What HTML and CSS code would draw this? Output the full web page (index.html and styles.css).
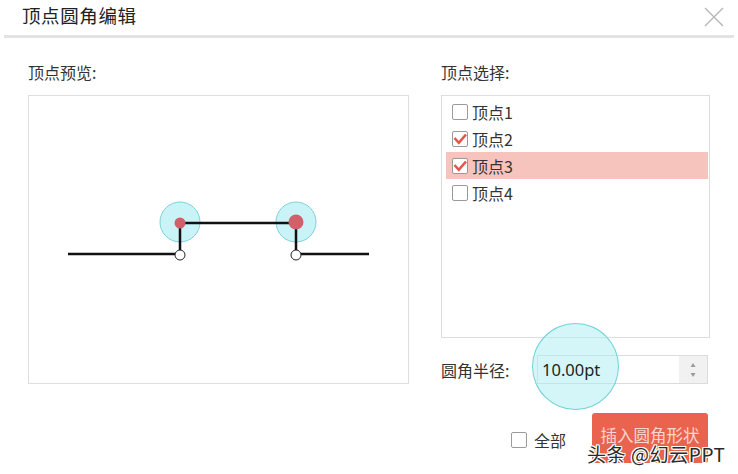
FILE: index.html
```html
<!DOCTYPE html>
<html lang="zh">
<head>
<meta charset="utf-8">
<link rel="stylesheet" href="styles.css">
</head>
<body>
<div class="dialog">
  <div class="header">
    <div class="title">顶点圆角编辑</div>
    <svg class="close" width="20" height="20" viewBox="0 0 20 20"><path d="M1 1 L19 19 M19 1 L1 19" stroke="#b5b5b5" stroke-width="1.3" fill="none"/></svg>
  </div>
  <div class="sep"></div>
  <div class="content">
    <div class="col-left">
      <div class="label">顶点预览:</div>
      <div class="preview">
        <svg class="diagram" width="379" height="287" viewBox="0 0 379 287">
          <circle cx="151" cy="126" r="20" fill="#c9f3f6" stroke="#7dd3d9" stroke-width="1"/>
          <circle cx="267" cy="126" r="20" fill="#c9f3f6" stroke="#7dd3d9" stroke-width="1"/>
          <path d="M39 158 H151 V127 H267 V158 H340" stroke="#111" stroke-width="2.5" fill="none"/>
          <circle cx="151" cy="127" r="5.5" fill="#d2606a"/>
          <circle cx="267" cy="126" r="7.5" fill="#d2606a"/>
          <circle cx="151" cy="159" r="5" fill="#fff" stroke="#222" stroke-width="1"/>
          <circle cx="267" cy="159" r="5" fill="#fff" stroke="#222" stroke-width="1"/>
        </svg>
      </div>
    </div>
    <div class="col-right">
      <div class="label">顶点选择:</div>
      <div class="list">
        <div class="row"><span class="cb"></span><span>顶点1</span></div>
        <div class="row"><span class="cb"><svg width="14" height="14" viewBox="0 0 14 14"><path d="M1.5 6 L5.8 10.8 L13 2.5" stroke="#e0574a" stroke-width="2.6" fill="none"/></svg></span><span>顶点2</span></div>
        <div class="row selected"><span class="cb"><svg width="14" height="14" viewBox="0 0 14 14"><path d="M1.5 6 L5.8 10.8 L13 2.5" stroke="#e0574a" stroke-width="2.6" fill="none"/></svg></span><span>顶点3</span></div>
        <div class="row"><span class="cb"></span><span>顶点4</span></div>
      </div>
      <div class="radius">
        <span class="rlabel">圆角半径:</span>
        <div class="spin">
          <span class="value">10.00pt</span>
          <span class="arrows"><span>▲</span><span>▼</span></span>
          <span class="halo"></span>
        </div>
      </div>
      <div class="actions">
        <label class="all"><span class="cb"></span><span>全部</span></label>
        <div class="btn">插入圆角形状</div>
      </div>
    </div>
  </div>
  <div class="watermark">头条 @幻云PPT</div>
</div>
</body>
</html>
```

FILE: styles.css
```css
html, body {
  margin: 0;
  padding: 0;
  background: #fff;
}
body {
  width: 738px;
  height: 474px;
  overflow: hidden;
  font-family: "Noto Sans CJK SC", "Noto Sans", sans-serif;
  color: #333;
}
.dialog {
  position: relative;
  width: 738px;
  height: 474px;
}
.header {
  height: 35px;
  display: flex;
  align-items: center;
  justify-content: space-between;
  padding: 0 14px 6px 22px;
  box-sizing: border-box;
}
.title {
  font-size: 18.5px;
  line-height: 24px;
  color: #222;
  letter-spacing: 0.6px;
}
.close {
  display: block;
  margin-top: 4px;
}
.sep {
  height: 3px;
  margin: 0 4px;
  background: #e3e3e3;
}
.content {
  display: grid;
  grid-template-columns: 381px 269px;
  column-gap: 32px;
  padding: 23px 28px 0 28px;
}
.label {
  font-size: 16px;
  line-height: 22px;
  height: 22px;
  margin-bottom: 12px;
  color: #333;
}
.preview {
  position: relative;
  height: 289px;
  border: 1px solid #dedede;
  box-sizing: border-box;
}
.diagram {
  position: absolute;
  left: 0;
  top: 0;
}
.list {
  height: 243px;
  border: 1px solid #dedede;
  box-sizing: border-box;
  padding: 2px 1px 0 4px;
}
.row {
  height: 27px;
  display: flex;
  align-items: center;
  gap: 4px;
  padding-left: 6px;
  font-size: 16px;
  color: #333;
}
.row.selected {
  background: #f7c3bd;
}
.cb {
  width: 16px;
  height: 16px;
  box-sizing: border-box;
  border: 1px solid #9a9a9a;
  border-radius: 2px;
  background: #fff;
  display: flex;
  align-items: center;
  justify-content: center;
  flex: none;
}
.cb svg {
  display: block;
}
.radius {
  display: flex;
  align-items: center;
  margin-top: 17px;
  height: 29px;
}
.rlabel {
  width: 96px;
  font-size: 16px;
  color: #333;
}
.spin {
  position: relative;
  width: 171px;
  height: 29px;
  border: 1px solid #dcdcdc;
  box-sizing: border-box;
  display: flex;
  align-items: center;
  justify-content: space-between;
}
.value {
  position: relative;
  z-index: 2;
  padding-left: 4px;
  font-family: "Noto Sans", sans-serif;
  font-size: 16.5px;
  color: #222;
}
.arrows {
  width: 28px;
  height: 100%;
  background: #f1f1f1;
  display: flex;
  flex-direction: column;
  align-items: center;
  justify-content: center;
  gap: 3px;
  font-size: 5px;
  color: #999;
  line-height: 6px;
}
.halo {
  position: absolute;
  left: -6px;
  top: -33px;
  width: 87px;
  height: 87px;
  box-sizing: border-box;
  border-radius: 50%;
  border: 1px solid rgba(90, 200, 208, 0.8);
  background: rgba(170, 238, 243, 0.5);
  z-index: 1;
}
.actions {
  display: flex;
  align-items: flex-start;
  justify-content: flex-end;
  margin-top: 29px;
  padding-right: 2px;
}
.all {
  display: flex;
  align-items: center;
  gap: 7px;
  margin-top: 15px;
  margin-right: 26px;
  font-size: 16px;
  color: #333;
}
.btn {
  width: 116px;
  height: 50px;
  background: #e9634f;
  border-radius: 3px;
  color: #fbd6cf;
  font-size: 16.5px;
  text-align: center;
  line-height: 44px;
}
.watermark {
  position: absolute;
  left: 587px;
  top: 441px;
  font-size: 19px;
  line-height: 26px;
  letter-spacing: 0.6px;
  color: #2a2a2a;
  text-shadow: 1px 0 0 #fff, -1px 0 0 #fff, 0 1px 0 #fff, 0 -1px 0 #fff, 1px 1px 0 #fff, -1px -1px 0 #fff, 1px -1px 0 #fff, -1px 1px 0 #fff;
}
```
